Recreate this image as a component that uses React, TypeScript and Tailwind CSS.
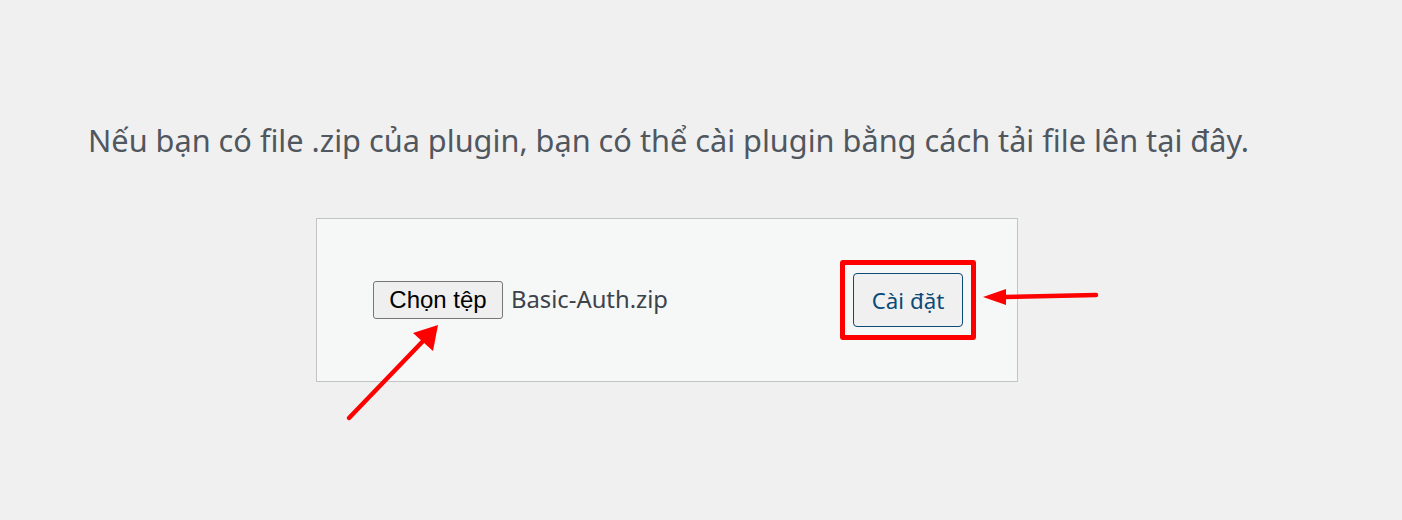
import React from "react";

export default function App() {
  return (
    <div className="relative h-[520px] w-[1402px] overflow-hidden bg-[#f0f0f1]">
      <div className="pl-[88px] pt-[118px]">
        <p
          className="text-[30.7px] leading-[44px] text-[#50575e] whitespace-nowrap"
          style={{ fontFamily: '"Noto Sans", "Open Sans", sans-serif' }}
        >
          Nếu bạn có file .zip của plugin, bạn có thể cài plugin bằng cách tải file lên tại đây.
        </p>
      </div>
      <div className="ml-[316px] mt-[56px] flex h-[164px] w-[702px] items-center border border-[#c3c4c7] bg-[#f6f7f7] pl-[56px]">
        <button
          className="flex h-[38px] w-[130px] items-center justify-center rounded-[3px] border border-[#767676] bg-[#efefef] text-[24px] text-black"
          style={{ fontFamily: '"Liberation Sans", Arial, sans-serif' }}
        >
          Chọn tệp
        </button>
        <span
          className="ml-[8px] text-[23.8px] text-[#3c434a]"
          style={{ fontFamily: '"Noto Sans", "Open Sans", sans-serif' }}
        >
          Basic-Auth.zip
        </span>
        <div className="ml-auto mr-[41px] flex h-[80px] w-[136px] items-center justify-center rounded-[3px] border-[5px] border-[#ff0000]">
          <button
            className="flex h-[54px] w-[110px] items-center justify-center rounded-[4px] border border-[#0a4b78] bg-[#f0f0f1] pt-[2px] text-[22.3px] text-[#0a4b78]"
            style={{ fontFamily: '"Noto Sans", "Open Sans", sans-serif' }}
          >
            Cài đặt
          </button>
        </div>
      </div>
      <svg
        className="pointer-events-none absolute left-0 top-0"
        width="1402"
        height="520"
        viewBox="0 0 1402 520"
      >
        <line x1="349" y1="418" x2="425" y2="339" stroke="#ff0000" strokeWidth="4.5" strokeLinecap="round" />
        <polygon points="438,325 433,351 413,333" fill="#ff0000" />
        <line x1="1096" y1="295" x2="1004" y2="297" stroke="#ff0000" strokeWidth="4.5" strokeLinecap="round" />
        <polygon points="983,297 1006,289 1006,305" fill="#ff0000" />
      </svg>
    </div>
  );
}
